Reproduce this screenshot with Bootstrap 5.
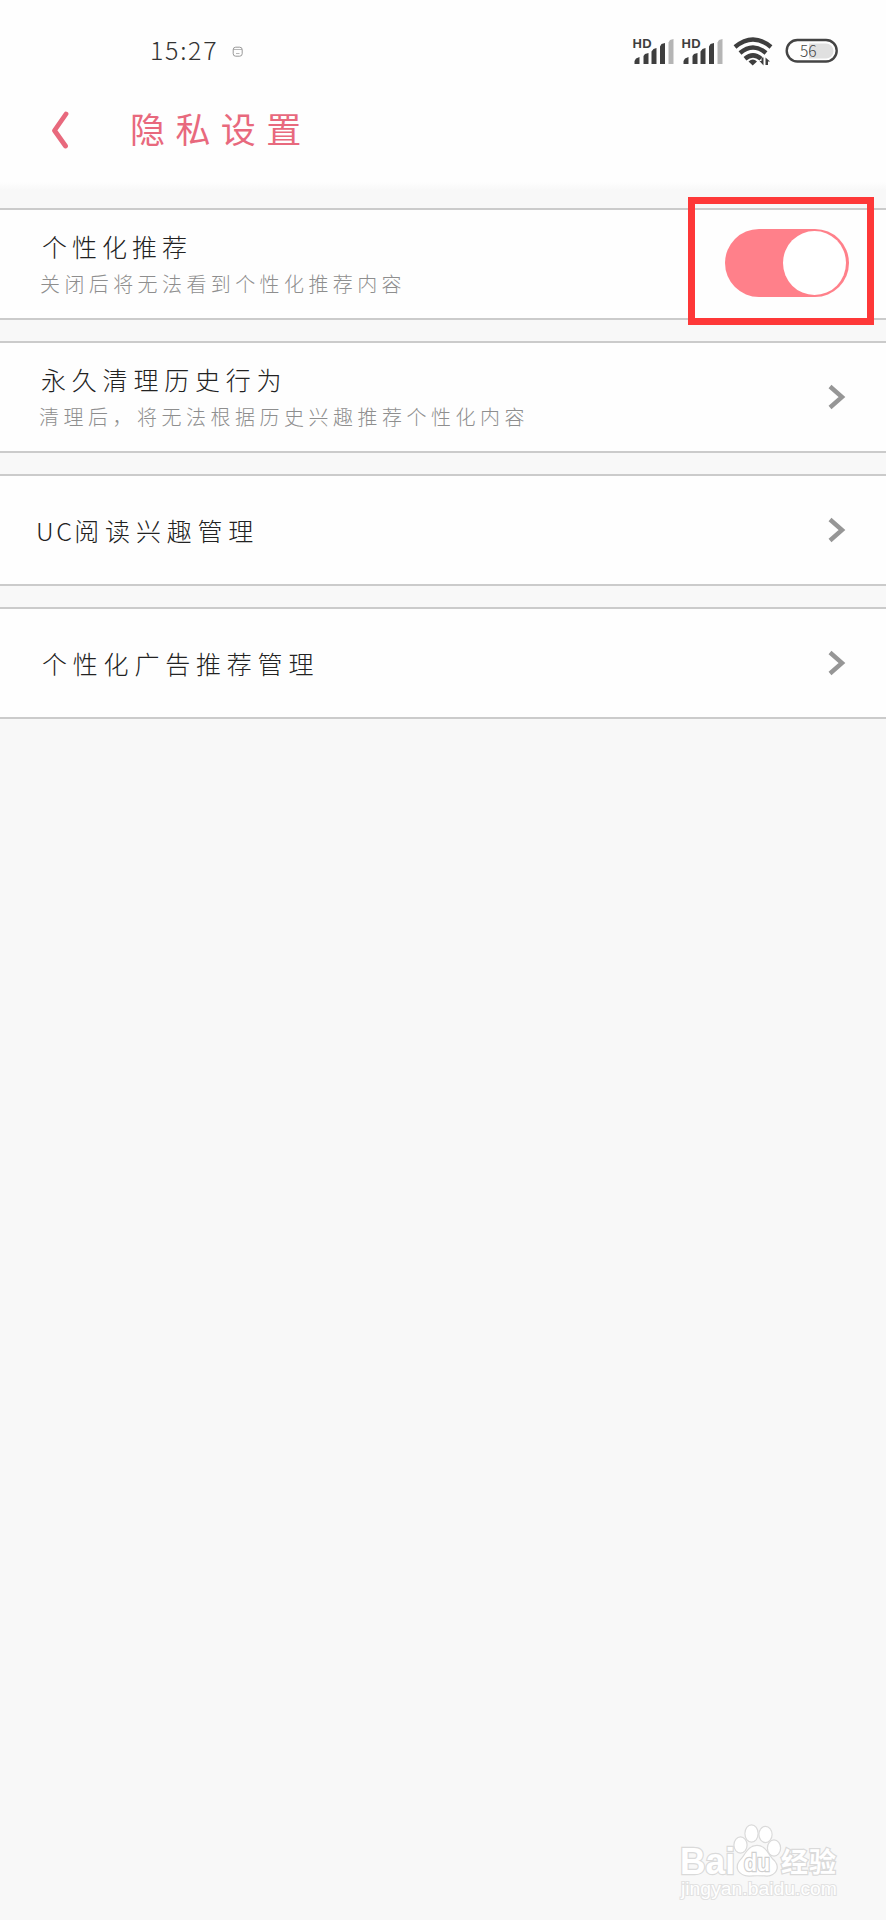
<!DOCTYPE html>
<html lang="zh-CN">
<head>
<meta charset="utf-8">
<meta name="viewport" content="width=device-width, initial-scale=1">
<title>隐私设置</title>
<link href="https://cdn.jsdelivr.net/npm/bootstrap@5.3.0/dist/css/bootstrap.min.css" rel="stylesheet">
<style>
  body { background: #f8f8f8; font-family: "Noto Sans CJK SC", sans-serif; font-weight: 300; color: #222; }
  .screen { height: 1920px; overflow: hidden; }
  .top-area { height: 190px; background: linear-gradient(#fefefe 182px, #f8f8f8); margin-bottom: 18px; }
  .status { height: 84px; padding: 30px 46px 0 150px; }
  .clock { font-size: 25px; line-height: 34px; letter-spacing: 1.7px; color: #333; width: 82px; margin-top: 2px; }
  .title-row { height: 92px; padding-left: 50px; }
  .title-row h1 { font-size: 35px; font-weight: 400; line-height: 50px; letter-spacing: 10.4px; color: #e8697d; margin: -4px 0 0 60px; }
  .setting { height: 112px; margin-bottom: 21px; border: solid #cbcbcb; border-width: 2px 0; border-radius: 0; background: #fefefe; padding: 0 39px 0 40px; }
  .label-main { font-size: 25px; line-height: 36px; letter-spacing: 5.8px; margin-top: -1px; }
  .label-sub { font-size: 20px; line-height: 30px; color: #8e8e8e; letter-spacing: 4.5px; margin-top: 5px; }
  .two-line { margin-top: -1px; }
  .toggle { width: 124px; height: 68px; border-radius: 34px; background: #ff808a; padding: 2px 3px; margin-top: -2px; }
  .knob { width: 63px; height: 64px; border-radius: 50%; background: #fff; }
  .highlight { top: -13px; left: 688px; width: 186px; height: 128px; border: 7px solid #fe3838; }
  .brand { right: 35px; bottom: 12px; }
</style>
</head>
<body>
<div class="screen position-relative">
  <header class="top-area">
    <div class="status d-flex align-items-start">
      <span class="clock">15:27</span>
      <svg width="12" height="12" viewBox="0 0 12 12" style="margin-top:16px" fill="none" stroke="#999"><rect x="1.2" y="1.2" width="9" height="9" rx="2.5"/><path d="M1 3.5H10M4 7.5H7.5" opacity=".7"/></svg>
      <svg class="ms-auto" width="210" height="40" viewBox="630 30 210 40">
        <defs>
          <g id="signal">
            <text x="0" y="48" font-family="Liberation Sans, sans-serif" font-size="13" font-weight="700" letter-spacing=".3" fill="#3e3e3e">HD</text>
            <g fill="#3e3e3e"><path d="M2 61 3.500 58.500 7 57V64H2zM11 56 12.500 54 16 53V64H11zM19 51.500 21 49 24 48V64H19zM27.500 46.500 29 44 32.500 43V64H27.500z"/><path fill="#b5b5b5" d="M36 42.500 37.500 40 41 39V64H36z"/></g>
          </g>
        </defs>
        <use href="#signal" x="632.500"/>
        <use href="#signal" x="681.500"/>
        <path fill="none" stroke="#3e3e3e" stroke-width="4.400" d="M735 47Q753 32 771 47M740 53Q753 42 766 53M745 58.700Q753 52 761 58.700"/>
        <path fill="#3e3e3e" d="M748.500 61.500Q753 57.500 757 61.500L752.700 65.500zM759.500 61H761.500V57.500H763.500V65.500zM765.500 57.500 770 61.500H768V65H765.500z"/>
        <path d="M809 43.500H826A7.500 7.500 0 0 1 826 58.500H809z" fill="#e0e0e0"/>
        <rect x="786.700" y="40" width="50" height="21.500" rx="10.700" fill="none" stroke="#444" stroke-width="2.400"/>
        <text x="800" y="57" font-family="Noto Sans CJK SC, sans-serif" font-size="15.500" font-weight="300" fill="#444">56</text>
      </svg>
    </div>
    <div class="title-row d-flex align-items-center">
      <svg width="20" height="38" viewBox="0 0 20 38" fill="none" stroke="#e8697d" stroke-width="4.800" stroke-linecap="round" stroke-linejoin="round"><path d="M16 3 4.500 19.500 15.500 35"/></svg>
      <h1>隐私设置</h1>
    </div>
  </header>

  <main>
    <section class="setting position-relative d-flex align-items-center justify-content-between" style="padding-right:37px">
      <div class="two-line">
        <div class="label-main" style="padding-left:2px;letter-spacing:5px">个性化推荐</div>
        <div class="label-sub" style="letter-spacing:4.400px">关闭后将无法看到个性化推荐内容</div>
      </div>
      <div class="toggle d-flex justify-content-end" role="switch" aria-checked="true"><span class="knob"></span></div>
      <div class="highlight position-absolute"></div>
    </section>

    <section class="setting d-flex align-items-center justify-content-between">
      <div class="two-line">
        <div class="label-main" style="padding-left:1px">永久清理历史行为</div>
        <div class="label-sub" style="margin-left:-1px">清理后，将无法根据历史兴趣推荐个性化内容</div>
      </div>
      <svg width="20" height="28" viewBox="0 0 20 28" fill="none" stroke="#969696" stroke-width="4.400"><path d="M3 3.500 15 14 3 24.500"/></svg>
    </section>

    <section class="setting d-flex align-items-center justify-content-between">
      <div class="label-main" style="margin-left:-4px"><span style="letter-spacing:2.500px">UC</span>阅读兴趣管理</div>
      <svg width="20" height="28" viewBox="0 0 20 28" fill="none" stroke="#969696" stroke-width="4.400"><path d="M3 3.500 15 14 3 24.500"/></svg>
    </section>

    <section class="setting d-flex align-items-center justify-content-between">
      <div class="label-main" style="padding-left:2px">个性化广告推荐管理</div>
      <svg width="20" height="28" viewBox="0 0 20 28" fill="none" stroke="#969696" stroke-width="4.400"><path d="M3 3.500 15 14 3 24.500"/></svg>
    </section>
  </main>

  <svg class="brand position-absolute" width="180" height="90" viewBox="670 1818 180 90" fill="#fff" stroke="#dadada" stroke-width="2.400" paint-order="stroke">
    <g font-family="Liberation Sans, sans-serif" font-weight="700">
      <text x="679" y="1874" font-size="36" textLength="55" lengthAdjust="spacingAndGlyphs">Bai</text>
      <ellipse cx="739.500" cy="1845" rx="6" ry="7.500"/>
      <ellipse cx="750.500" cy="1833.500" rx="6" ry="8"/>
      <ellipse cx="764.500" cy="1834.500" rx="6" ry="7.500"/>
      <ellipse cx="773" cy="1848" rx="6" ry="7.500"/>
      <path d="M756 1846C765 1846 767 1856 773 1861 779 1868 774 1875 766 1875.500 760 1875 752 1875 748 1875.500 738 1875 734 1868 739 1861 745 1855 747 1846 756 1846Z"/>
      <text x="743" y="1871" font-size="23" stroke="#cfcfcf" textLength="26" lengthAdjust="spacingAndGlyphs">du</text>
    </g>
    <text x="780" y="1872" font-family="Noto Sans CJK SC, sans-serif" font-size="27" font-weight="700" textLength="55">经验</text>
    <text x="680" y="1895" font-family="Liberation Sans, sans-serif" font-size="18" stroke="#e2e2e2" stroke-width="2" textLength="156" lengthAdjust="spacingAndGlyphs">jingyan.baidu.com</text>
  </svg>
</div>
<script src="https://cdn.jsdelivr.net/npm/bootstrap@5.3.0/dist/js/bootstrap.bundle.min.js"></script>
</body>
</html>
